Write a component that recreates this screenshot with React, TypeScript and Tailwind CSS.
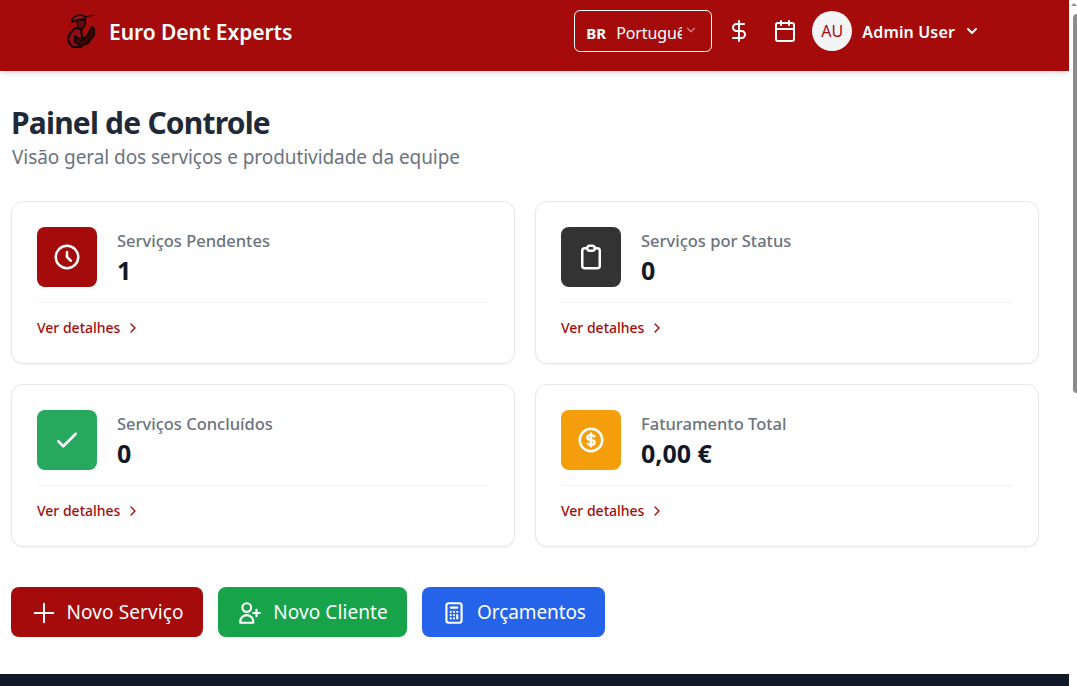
import { Calendar, ChevronDown, ChevronRight, DollarSign } from "lucide-react";

function Outline({ d, className, width = 2 }: { d: string; className: string; width?: number }) {
  return (
    <svg viewBox="0 0 24 24" fill="none" stroke="currentColor" strokeWidth={width} strokeLinecap="round" strokeLinejoin="round" className={className}>
      <path d={d} />
    </svg>
  );
}

const cards = [
  { title: "Serviços Pendentes", value: "1", color: "bg-[#a50b0b]", icon: "M12 8v4l3 3m6-3a9 9 0 11-18 0 9 9 0 0118 0z" },
  {
    title: "Serviços por Status",
    value: "0",
    color: "bg-[#333333]",
    icon: "M9 5H7a2 2 0 00-2 2v12a2 2 0 002 2h10a2 2 0 002-2V7a2 2 0 00-2-2h-2M9 5a2 2 0 002 2h2a2 2 0 002-2M9 5a2 2 0 012-2h2a2 2 0 012 2",
  },
  { title: "Serviços Concluídos", value: "0", color: "bg-[#27a85f]", icon: "M5 13l4 4L19 7" },
  {
    title: "Faturamento Total",
    value: "0,00 €",
    color: "bg-[#f59e0b]",
    icon: "M12 8c-1.657 0-3 .895-3 2s1.343 2 3 2 3 .895 3 2-1.343 2-3 2m0-8c1.11 0 2.08.402 2.599 1M12 8V7m0 1v8m0 0v1m0-1c-1.11 0-2.08-.402-2.599-1M21 12a9 9 0 11-18 0 9 9 0 0118 0z",
  },
];

function Logo() {
  return (
    <svg viewBox="0 0 30 34" className="w-[30px] h-[34px]" stroke="#1a0505" strokeLinejoin="round">
      {/* rod */}
      <path d="M18 3 L27 1" fill="none" strokeWidth="1.2" />
      {/* torso */}
      <path d="M9 14 L14 15 L15 22 L14 33 L6 33 C3 31 1 27 1 25 C2 20 5 16 9 14 Z" fill="#8f0d10" strokeWidth="2.2" />
      {/* forearm and hand */}
      <path d="M8 22 L14 26 L20 22 L25 13 L27 15 L27 21 L21 29 L14 32 L8 28 Z" fill="#3a0707" strokeWidth="2" />
      {/* face */}
      <path d="M10 6 L18 6 L18 11 L15 15 L11 14 Z" fill="#6a0a0a" strokeWidth="1.8" />
      {/* cap */}
      <path d="M5 7 C5 3 10 1 14 1 L19 3 L18 5 L10 6 L5 8 Z" fill="#a81216" strokeWidth="1.8" />
    </svg>
  );
}

export default function App() {
  return (
    <div className="h-screen flex overflow-hidden bg-white font-['Noto_Sans',sans-serif]">
      <div className="flex-1 min-w-0 flex flex-col">
        {/* header */}
        <header className="h-[71px] shrink-0 bg-[#a50b0b] shadow-md flex items-center pb-[10px] pl-[67px] pr-[89px] text-white">
          <Logo />
          <span className="ml-3 mt-[4px] text-[21px] font-semibold tracking-[-0.05px]">Euro Dent Experts</span>
          <div className="ml-auto w-[138px] h-[42px] border border-white rounded-md flex items-center pl-[11px] relative">
            <span className="mt-[6px] text-[15px] font-bold">BR</span>
            <span className="ml-[10px] mt-[4px] w-[66px] overflow-hidden whitespace-nowrap text-base tracking-[-0.1px]">Português</span>
            <ChevronDown className="absolute right-[13px] top-[12px] w-3.5 h-3.5 text-white/50" />
          </div>
          <DollarSign className="ml-[15px] w-6 h-6" />
          <Calendar className="ml-[22px] w-6 h-6" />
          <div className="ml-[15px] w-10 h-10 rounded-full bg-[#f3f4f6] flex items-center justify-center text-base text-[#a50b0b]">
            AU
          </div>
          <span className="ml-[10px] mt-[2px] text-base font-semibold tracking-[0.15px]">Admin User</span>
          <ChevronDown strokeWidth={3} className="ml-[9px] w-4 h-4" />
        </header>

        <main className="flex-1 min-h-0 flex flex-col pl-[11px] pr-[30px]">
          <h1 className="mt-[34px] text-3xl leading-9 font-bold text-[#1f2937] tracking-[-0.8px]">Painel de Controle</h1>
          <p className="mt-[2px] ml-[1px] text-[19px] leading-7 text-[#6b7280] tracking-[-0.07px]">
            Visão geral dos serviços e produtividade da equipe
          </p>

          <div className="mt-[30px] grid grid-cols-2 gap-x-5 gap-y-5">
            {cards.map(({ title, value, color, icon }) => (
              <div key={title} className="h-[163px] bg-white border border-[#e5e7eb] rounded-xl shadow-xs px-[25px] pt-[25px]">
                <div className="flex items-center">
                  <div className={`w-[60px] h-[60px] rounded-lg ${color} flex items-center justify-center text-white`}>
                    <Outline d={icon} className="w-[30px] h-[30px]" />
                  </div>
                  <div className="ml-5">
                    <div className="text-[16.5px] leading-6 font-medium text-[#6b7280]">{title}</div>
                    <div className="mt-[1px] text-[25px] leading-8 font-bold text-[#111827]">{value}</div>
                  </div>
                </div>
                <div className="mt-[15px] border-t border-[#f3f4f6] pt-[15px] flex items-center text-sm leading-5 font-medium text-[#a50b0b]">
                  Ver detalhes
                  <ChevronRight className="ml-[5px] w-4 h-4" />
                </div>
              </div>
            ))}
          </div>

          <div className="mt-10 flex gap-[15px]">
            <button className="w-[192px] h-[50px] pt-[1px] rounded-lg bg-[#a50b0b] text-white text-[19px] flex items-center justify-center gap-[8px] tracking-[0.1px]">
              <Outline d="M12 4v16m8-8H4" width={1.7} className="w-7 h-7" /> Novo Serviço
            </button>
            <button className="w-[189px] h-[50px] pt-[1px] rounded-lg bg-[#16a34a] text-white text-[19px] flex items-center justify-center gap-[10px] tracking-[0.1px]">
              <Outline d="M18 9v3m0 0v3m0-3h3m-3 0h-3m-2-5a4 4 0 11-8 0 4 4 0 018 0zM3 20a6 6 0 0112 0v1H3v-1z" className="w-[26px] h-[26px]" /> Novo Cliente
            </button>
            <button className="w-[183px] h-[50px] pt-[1px] rounded-lg bg-[#2563eb] text-white text-[19px] flex items-center justify-center gap-[10px] tracking-[-0.1px]">
              <Outline
                d="M9 7h6m0 10v-3m-3 3h.01M9 17h.01M9 14h.01M12 14h.01M15 11h.01M12 11h.01M9 11h.01M7 21h10a2 2 0 002-2V5a2 2 0 00-2-2H7a2 2 0 00-2 2v14a2 2 0 002 2z"
                className="w-[26px] h-[26px]"
              />{" "}
              Orçamentos
            </button>
          </div>
        </main>

        <footer className="h-3 shrink-0 bg-[#111827]" />
      </div>

      {/* scrollbar strip */}
      <div className="w-2 shrink-0 bg-white flex flex-col items-end">
        <div className="mt-[3px] w-0 h-0 border-x-[3px] border-x-transparent border-b-[3px] border-b-[#8c8c8c]" />
        <div className="mt-[8px] w-1 h-[379px] rounded-l-full bg-[#8c8c8c]" />
      </div>
    </div>
  );
}
